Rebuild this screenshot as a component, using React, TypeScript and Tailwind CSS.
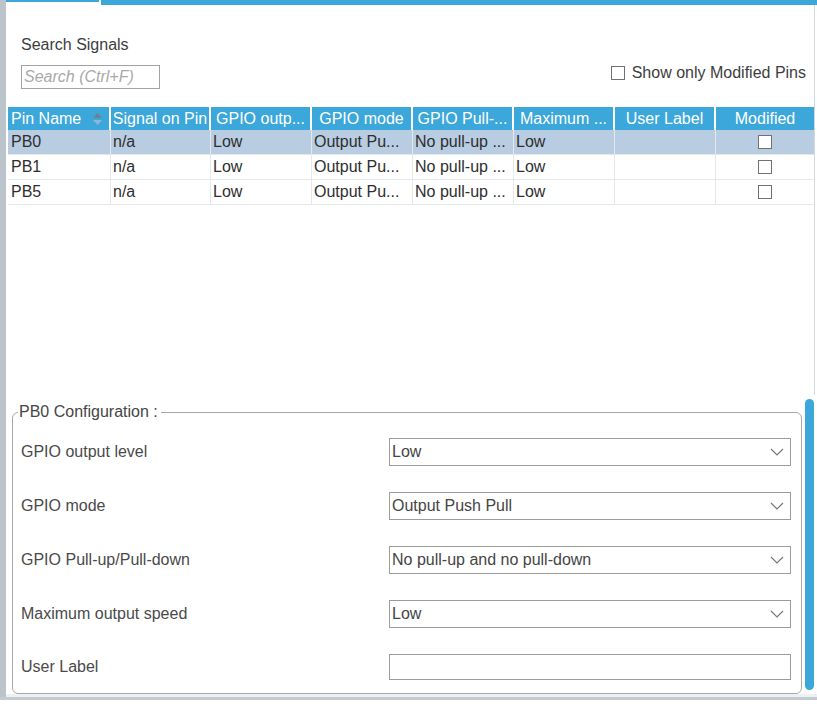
import React from "react";

const columns = [
  { title: "Pin Name", w: "w-[103px]", sort: true },
  { title: "Signal on Pin", w: "w-[100px]" },
  { title: "GPIO outp...", w: "w-[101px]" },
  { title: "GPIO mode", w: "w-[101px]" },
  { title: "GPIO Pull-...", w: "w-[101px]" },
  { title: "Maximum ...", w: "w-[101px]" },
  { title: "User Label", w: "w-[101px]" },
  { title: "Modified", w: "w-[98px]" },
];

const pins = [
  { name: "PB0", selected: true },
  { name: "PB1" },
  { name: "PB5" },
];

const settings = [
  { label: "GPIO output level", value: "Low" },
  { label: "GPIO mode", value: "Output Push Pull" },
  { label: "GPIO Pull-up/Pull-down", value: "No pull-up and no pull-down" },
  { label: "Maximum output speed", value: "Low" },
];

function Box() {
  return <span className="block w-[14px] h-[14px] border border-[#717171] bg-white" />;
}

function SortIcon() {
  return (
    <svg width="9" height="12" viewBox="0 0 9 12">
      <path d="M4.5 0 L9 5 L0 5 Z" fill="#6f8190" />
      <path d="M0 7 L9 7 L4.5 12 Z" fill="#8cb8d4" />
    </svg>
  );
}

function Select({ value }: { value: string }) {
  return (
    <div className="w-[402px] h-[28px] border border-[#9c9c9c] bg-white flex items-center justify-between pl-[2px] pr-[6px]">
      <span className="text-[#454545]">{value}</span>
      <svg width="14" height="8" viewBox="0 0 14 8">
        <polyline points="1,1 7,7 13,1" fill="none" stroke="#777" strokeWidth="1.2" />
      </svg>
    </div>
  );
}

export default function App() {
  const cells = (pin: string) => [pin, "n/a", "Low", "Output Pu...", "No pull-up ...", "Low", "", null];

  return (
    <div className="w-[817px] h-[711px] bg-white overflow-hidden font-['Liberation_Sans',Arial,sans-serif] text-[16px] leading-[18px]">
      <div className="flex h-[697px]">
        <div className="w-[6px] bg-[#bbc4ca]" />
        <div className="flex-1 flex flex-col">
          {/* tab strip */}
          <div className="flex h-[5px]">
            <div className="w-[93px] h-[2px] bg-[#3ba7db]" />
            <div className="w-[2px]" />
            <div className="flex-1 bg-[#3ba7db]" />
          </div>

          {/* upper pane: search and table */}
          <div className="h-[390px] border-r border-[#d3d8dc] w-[809px]">
            <div className="pl-[15px] pr-[8px] pt-[30px]">
              <div className="text-[#3d3d3d] leading-[20px]">Search Signals</div>
              <div className="flex items-start justify-between mt-[10px]">
                <div className="w-[139px] h-[24px] border border-[#a3a3a3] flex items-center pl-[2px]">
                  <span className="italic text-[#a9a9a9]">Search (Ctrl+F)</span>
                </div>
                <label className="flex items-center gap-[7px] h-[18px] mt-[-1px] text-[#3d3d3d]">
                  <Box />
                  <span>Show only Modified Pins</span>
                </label>
              </div>
            </div>

            <div className="ml-[2px] mt-[18px] w-[806px]">
              <div className="flex h-[23px] bg-[#3ba7db] text-white">
                {columns.map((c, i) => (
                  <div
                    key={c.title}
                    className={`${c.w} ${i < 7 ? "border-r-2 border-white" : ""} flex items-center ${c.sort ? "justify-between pl-[3px] pr-[7px]" : "justify-center px-[2px]"} whitespace-nowrap overflow-hidden`}
                  >
                    <span>{c.title}</span>
                    {c.sort && <SortIcon />}
                  </div>
                ))}
              </div>
              {pins.map((p) => (
                <div
                  key={p.name}
                  className={`flex h-[25px] border-b border-[#e3e8ec] text-[#2e2e2e] ${p.selected ? "bg-[#b9cde2]" : "bg-white"}`}
                >
                  {cells(p.name).map((v, i) => (
                    <div
                      key={i}
                      className={`${columns[i].w} ${i < 7 ? "border-r border-[#e3e8ec]" : ""} flex items-center ${i === 7 ? "justify-center" : i === 0 ? "pl-[3px]" : "pl-[2px]"} whitespace-nowrap overflow-hidden`}
                    >
                      {v === null ? <Box /> : v}
                    </div>
                  ))}
                </div>
              ))}
            </div>
          </div>

          {/* lower pane: configuration */}
          <div className="flex flex-1 pl-[6px]">
            <fieldset className="w-[790px] border border-[#a7a7a7] rounded-[6px] mt-[8px] px-0 pt-[17px] pb-[13px]">
              <legend className="ml-[5px] pl-[1px] pr-[3px] text-[#454545]">PB0 Configuration :</legend>
              <div className="flex flex-col gap-[26px] pl-[8px]">
                {settings.map((s) => (
                  <div key={s.label} className="flex items-center h-[28px]">
                    <span className="w-[368px] text-[#4a4a4a]">{s.label}</span>
                    <Select value={s.value} />
                  </div>
                ))}
                <div className="flex items-center h-[26px]">
                  <span className="w-[368px] text-[#4a4a4a]">User Label</span>
                  <div className="w-[402px] h-[26px] border border-[#9c9c9c] bg-white" />
                </div>
              </div>
            </fieldset>
            <div className="ml-[3px] mt-[4px] mb-[4px] w-[9px] rounded-full bg-[#3ba7db]" />
          </div>
          <div className="h-[3px] bg-[#eef1f3]" />
        </div>
      </div>
      <div className="h-[3px] bg-[#c3cbd0]" />
    </div>
  );
}
